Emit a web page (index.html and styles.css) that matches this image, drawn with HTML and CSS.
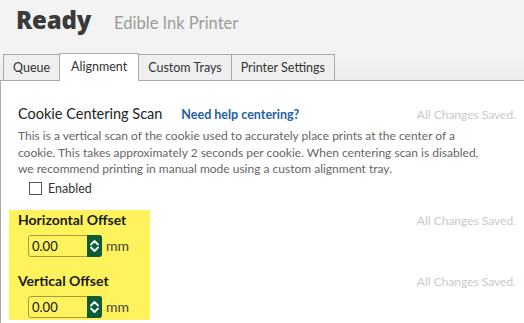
FILE: index.html
```html
<!DOCTYPE html>
<html lang="en">
<head>
    <meta charset="UTF-8">
    <meta name="viewport" content="width=device-width, initial-scale=1.0">
    <title>Ready - Edible Ink Printer</title>
    <link rel="stylesheet" href="styles.css">
</head>
<body>

<div class="header">
    <h1 class="status">Ready</h1>
    <span class="device">Edible Ink Printer</span>
</div>

<div class="tabs">
    <div class="tab queue">Queue</div>
    <div class="tab active">Alignment</div>
    <div class="tab">Custom Trays</div>
    <div class="tab">Printer Settings</div>
</div>

<div class="panel">
    <div class="scan">
        <div class="scan-head">
            <span class="scan-title">Cookie Centering Scan</span>
            <a class="help" href="#">Need help centering?</a>
            <span class="saved">All Changes Saved.</span>
        </div>
        <p class="desc">This is a vertical scan of the cookie used to accurately place prints at the center of a cookie. This takes approximately 2 seconds per cookie. When centering scan is disabled, we recommend printing in manual mode using a custom alignment tray.</p>
        <label class="check">
            <span class="box"></span>
            Enabled
        </label>
    </div>

    <div class="offsets">
        <div class="highlight"></div>

        <div class="field">
            <div class="field-label">Horizontal Offset</div>
            <div class="spin-row">
                <div class="spin">
                    <span class="spin-value">0.00</span>
                    <span class="spin-btn">
                        <svg width="11" height="18" viewBox="0 0 11 18"><path d="M2 7.5 L5.5 4 L9 7.5 M2 10.5 L5.5 14 L9 10.5" fill="none" stroke="#fff" stroke-width="1.8" stroke-linecap="round" stroke-linejoin="round"/></svg>
                    </span>
                </div>
                <span class="unit">mm</span>
            </div>
        </div>
        <span class="saved row1">All Changes Saved.</span>

        <div class="field row2">
            <div class="field-label">Vertical Offset</div>
            <div class="spin-row">
                <div class="spin">
                    <span class="spin-value">0.00</span>
                    <span class="spin-btn">
                        <svg width="11" height="18" viewBox="0 0 11 18"><path d="M2 7.5 L5.5 4 L9 7.5 M2 10.5 L5.5 14 L9 10.5" fill="none" stroke="#fff" stroke-width="1.8" stroke-linecap="round" stroke-linejoin="round"/></svg>
                    </span>
                </div>
                <span class="unit">mm</span>
            </div>
        </div>
        <span class="saved row2">All Changes Saved.</span>
    </div>
</div>

</body>
</html>
```

FILE: styles.css
```css
body {
    font-family: Lato, "Open Sans", sans-serif;
    background-color: #f3f3f3;
    margin: 0;
    color: #222;
    overflow: hidden;
}
.header {
    display: flex;
    align-items: baseline;
    height: 53px;
    padding-left: 16px;
    box-sizing: border-box;
}
.status {
    margin: 0;
    font-family: "Open Sans", sans-serif;
    font-size: 24px;
    font-weight: 800;
    color: #3a3a3a;
    line-height: 40px;
    letter-spacing: -0.2px;
}
.device {
    margin-left: 23px;
    font-size: 16.5px;
    color: #9c9c9c;
}
.tabs {
    display: flex;
    align-items: flex-end;
    padding-left: 3px;
    height: 27px;
    background: linear-gradient(#f3f3f3, #ececec);
}
.tab {
    height: 25px;
    line-height: 25px;
    padding: 0 9px;
    border: 1px solid #aaa;
    border-bottom: none;
    margin-left: -1px;
    font-size: 12.5px;
    color: #333;
    background-color: #efefef;
}
.tab.queue {
    margin-left: 0;
    padding: 0 9px;
}
.tab.active {
    height: 27px;
    margin-bottom: -1px;
    background-color: #fff;
    position: relative;
    z-index: 1;
    padding: 0 11px;
}
.panel {
    background-color: #fff;
    border-top: 1px solid #aaa;
    border-left: 1px solid #aaa;
    height: calc(100vh - 80px);
    box-sizing: border-box;
    padding: 23px 8px 0 17px;
}
.scan-head {
    display: flex;
    align-items: baseline;
    line-height: 20px;
}
.scan-title {
    font-size: 14.5px;
    color: #222;
}
.help {
    margin-left: 19px;
    font-size: 12.5px;
    font-weight: 700;
    color: #1f5fa5;
    text-decoration: none;
}
.saved {
    margin-left: auto;
    font-size: 12px;
    color: #c9c9c9;
}
.desc {
    margin: 3px 0 0;
    width: 468px;
    font-size: 12px;
    line-height: 16.5px;
    color: #666;
}
.check {
    display: flex;
    align-items: center;
    margin: 3px 0 0 11px;
    font-size: 12.5px;
    line-height: 16px;
    color: #333;
}
.box {
    width: 11px;
    height: 11px;
    border: 1px solid #555;
    margin-right: 6px;
}
.offsets {
    display: grid;
    grid-template-columns: 141px 1fr;
    margin: 13px 0 0 -9px;
}
.highlight {
    grid-column: 1;
    grid-row: 1 / 3;
    background-color: #fef35c;
}
.field {
    grid-column: 1;
    grid-row: 1;
    padding-left: 9px;
}
.field.row2 {
    grid-row: 2;
    padding-top: 14px;
    padding-bottom: 2px;
}
.offsets .saved {
    grid-column: 2;
    justify-self: end;
}
.saved.row1 {
    grid-row: 1;
    margin-top: 3px;
}
.saved.row2 {
    grid-row: 2;
    margin-top: 17px;
}
.field-label {
    font-size: 14px;
    font-weight: 700;
    color: #1a1a1a;
    line-height: 20px;
}
.spin-row {
    display: flex;
    align-items: center;
    margin: 5px 0 0 10px;
}
.spin {
    display: flex;
    width: 74px;
    height: 22px;
    box-sizing: border-box;
    border: 1px solid #a99a3a;
    border-radius: 3px;
}
.spin-value {
    flex: 1;
    padding-left: 3px;
    font-size: 13px;
    line-height: 20px;
    color: #111;
}
.spin-btn {
    width: 15px;
    margin: -1px -1px -1px 0;
    background-color: #0d5a37;
    border-radius: 0 3px 3px 0;
    display: flex;
    align-items: center;
    justify-content: center;
}
.unit {
    margin-left: 4px;
    font-size: 14px;
    color: #444;
}
```
